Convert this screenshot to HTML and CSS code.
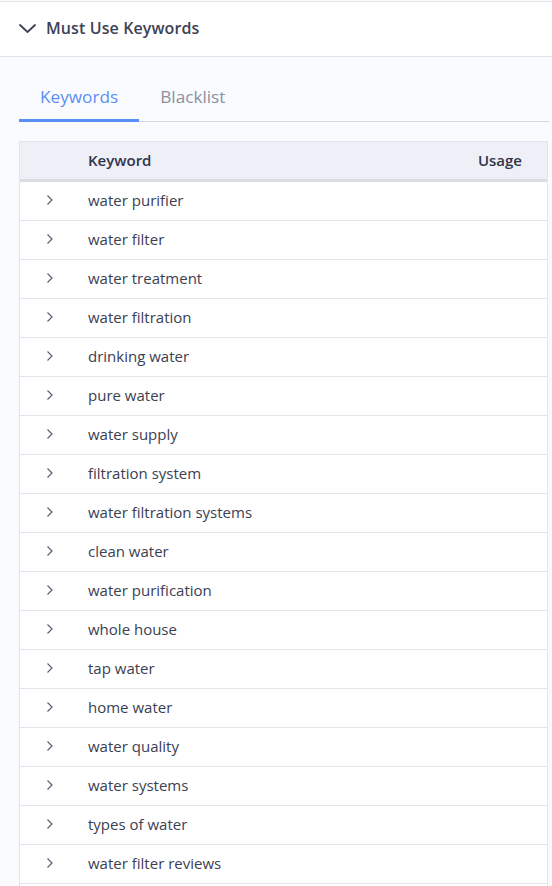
FILE: index.html
```html
<!DOCTYPE html>
<html>
<head>
<meta charset="utf-8">
<link rel="stylesheet" href="styles.css">
</head>
<body>
<div class="panel">
  <div class="panel-head">
    <svg class="caret-down" width="18" height="10" viewBox="0 0 18 10"><path d="M1 1 L8.5 8 L16 1" fill="none" stroke="#3d4354" stroke-width="1.8" stroke-linecap="round" stroke-linejoin="round"/></svg>
    <span class="title">Must Use Keywords</span>
  </div>
  <div class="panel-body">
    <div class="tabs">
      <div class="tab active">Keywords</div>
      <div class="tab">Blacklist</div>
    </div>
    <div class="table">
      <div class="thead">
        <div class="c-exp"></div>
        <div class="c-kw">Keyword</div>
        <div class="c-use">Usage</div>
      </div>
      <div class="tbody">
        <div class="row"><div class="c-exp"><svg width="8" height="12" viewBox="0 0 8 12"><path d="M1.5 1.5 L6 6 L1.5 10.5" fill="none" stroke="#5a6072" stroke-width="1.2"/></svg></div><div class="c-kw">water purifier</div><div class="c-use"></div></div>
        <div class="row"><div class="c-exp"><svg width="8" height="12" viewBox="0 0 8 12"><path d="M1.5 1.5 L6 6 L1.5 10.5" fill="none" stroke="#5a6072" stroke-width="1.2"/></svg></div><div class="c-kw">water filter</div><div class="c-use"></div></div>
        <div class="row"><div class="c-exp"><svg width="8" height="12" viewBox="0 0 8 12"><path d="M1.5 1.5 L6 6 L1.5 10.5" fill="none" stroke="#5a6072" stroke-width="1.2"/></svg></div><div class="c-kw">water treatment</div><div class="c-use"></div></div>
        <div class="row"><div class="c-exp"><svg width="8" height="12" viewBox="0 0 8 12"><path d="M1.5 1.5 L6 6 L1.5 10.5" fill="none" stroke="#5a6072" stroke-width="1.2"/></svg></div><div class="c-kw">water filtration</div><div class="c-use"></div></div>
        <div class="row"><div class="c-exp"><svg width="8" height="12" viewBox="0 0 8 12"><path d="M1.5 1.5 L6 6 L1.5 10.5" fill="none" stroke="#5a6072" stroke-width="1.2"/></svg></div><div class="c-kw">drinking water</div><div class="c-use"></div></div>
        <div class="row"><div class="c-exp"><svg width="8" height="12" viewBox="0 0 8 12"><path d="M1.5 1.5 L6 6 L1.5 10.5" fill="none" stroke="#5a6072" stroke-width="1.2"/></svg></div><div class="c-kw">pure water</div><div class="c-use"></div></div>
        <div class="row"><div class="c-exp"><svg width="8" height="12" viewBox="0 0 8 12"><path d="M1.5 1.5 L6 6 L1.5 10.5" fill="none" stroke="#5a6072" stroke-width="1.2"/></svg></div><div class="c-kw">water supply</div><div class="c-use"></div></div>
        <div class="row"><div class="c-exp"><svg width="8" height="12" viewBox="0 0 8 12"><path d="M1.5 1.5 L6 6 L1.5 10.5" fill="none" stroke="#5a6072" stroke-width="1.2"/></svg></div><div class="c-kw">filtration system</div><div class="c-use"></div></div>
        <div class="row"><div class="c-exp"><svg width="8" height="12" viewBox="0 0 8 12"><path d="M1.5 1.5 L6 6 L1.5 10.5" fill="none" stroke="#5a6072" stroke-width="1.2"/></svg></div><div class="c-kw">water filtration systems</div><div class="c-use"></div></div>
        <div class="row"><div class="c-exp"><svg width="8" height="12" viewBox="0 0 8 12"><path d="M1.5 1.5 L6 6 L1.5 10.5" fill="none" stroke="#5a6072" stroke-width="1.2"/></svg></div><div class="c-kw">clean water</div><div class="c-use"></div></div>
        <div class="row"><div class="c-exp"><svg width="8" height="12" viewBox="0 0 8 12"><path d="M1.5 1.5 L6 6 L1.5 10.5" fill="none" stroke="#5a6072" stroke-width="1.2"/></svg></div><div class="c-kw">water purification</div><div class="c-use"></div></div>
        <div class="row"><div class="c-exp"><svg width="8" height="12" viewBox="0 0 8 12"><path d="M1.5 1.5 L6 6 L1.5 10.5" fill="none" stroke="#5a6072" stroke-width="1.2"/></svg></div><div class="c-kw">whole house</div><div class="c-use"></div></div>
        <div class="row"><div class="c-exp"><svg width="8" height="12" viewBox="0 0 8 12"><path d="M1.5 1.5 L6 6 L1.5 10.5" fill="none" stroke="#5a6072" stroke-width="1.2"/></svg></div><div class="c-kw">tap water</div><div class="c-use"></div></div>
        <div class="row"><div class="c-exp"><svg width="8" height="12" viewBox="0 0 8 12"><path d="M1.5 1.5 L6 6 L1.5 10.5" fill="none" stroke="#5a6072" stroke-width="1.2"/></svg></div><div class="c-kw">home water</div><div class="c-use"></div></div>
        <div class="row"><div class="c-exp"><svg width="8" height="12" viewBox="0 0 8 12"><path d="M1.5 1.5 L6 6 L1.5 10.5" fill="none" stroke="#5a6072" stroke-width="1.2"/></svg></div><div class="c-kw">water quality</div><div class="c-use"></div></div>
        <div class="row"><div class="c-exp"><svg width="8" height="12" viewBox="0 0 8 12"><path d="M1.5 1.5 L6 6 L1.5 10.5" fill="none" stroke="#5a6072" stroke-width="1.2"/></svg></div><div class="c-kw">water systems</div><div class="c-use"></div></div>
        <div class="row"><div class="c-exp"><svg width="8" height="12" viewBox="0 0 8 12"><path d="M1.5 1.5 L6 6 L1.5 10.5" fill="none" stroke="#5a6072" stroke-width="1.2"/></svg></div><div class="c-kw">types of water</div><div class="c-use"></div></div>
        <div class="row"><div class="c-exp"><svg width="8" height="12" viewBox="0 0 8 12"><path d="M1.5 1.5 L6 6 L1.5 10.5" fill="none" stroke="#5a6072" stroke-width="1.2"/></svg></div><div class="c-kw">water filter reviews</div><div class="c-use"></div></div>
        <div class="row"><div class="c-exp"></div><div class="c-kw"></div><div class="c-use"></div></div>
      </div>
    </div>
  </div>
</div>
</body>
</html>
```
FILE: styles.css
```css
html, body {
  margin: 0;
  padding: 0;
  height: 886px;
  overflow: hidden;
  background: #fafbfe;
  font-family: "Open Sans", "Noto Sans", sans-serif;
}
.panel {
  margin-top: 1px;
  border-top: 1px solid #e2e3e8;
}
.panel-head {
  height: 52px;
  padding-bottom: 2px;
  display: flex;
  align-items: center;
  padding-left: 19px;
  border-bottom: 1px solid #e2e4ec;
  background: #ffffff;
}
.caret-down {
  display: block;
  margin-right: 9px;
  margin-top: 2px;
}
.title {
  font-size: 16px;
  font-weight: 600;
  color: #3d4254;
  letter-spacing: 0.1px;
}
.panel-body {
  background: #fafbfe;
  padding: 19px 3px 0 19px;
}
.tabs {
  display: flex;
  border-bottom: 1px solid #d6d9e3;
  height: 45px;
  align-items: stretch;
}
.tab {
  padding: 0 21px;
  font-size: 17.2px;
  line-height: 41px;
  padding-bottom: 2px;
  color: #8b909e;
  margin-bottom: -1px;
  border-bottom: 3px solid transparent;
}
.tab.active {
  color: #5b8ff8;
  border-bottom-color: #5b8ff8;
}
.table {
  margin-top: 19px;
  margin-right: 1px;
  border: 1px solid #e3e4ec;
  border-bottom: none;
  background: #ffffff;
}
.thead {
  display: flex;
  align-items: center;
  height: 35px;
  padding-bottom: 2px;
  background: #eeeff7;
  border-bottom: 3px solid #dcdde3;
  font-size: 15px;
  font-weight: 600;
  color: #30354a;
}
.row {
  display: flex;
  align-items: center;
  height: 36px;
  padding-bottom: 2px;
  border-bottom: 1px solid #e3e4ec;
  font-size: 15px;
  color: #3b4052;
}
.c-exp {
  width: 68px;
  display: flex;
  justify-content: flex-start;
  padding-left: 26px;
  box-sizing: border-box;
}
.c-exp svg { display: block; }
.c-kw {
  flex: 1;
}
.c-use {
  width: 120px;
  text-align: right;
  padding-right: 25px;
  box-sizing: border-box;
}
```
